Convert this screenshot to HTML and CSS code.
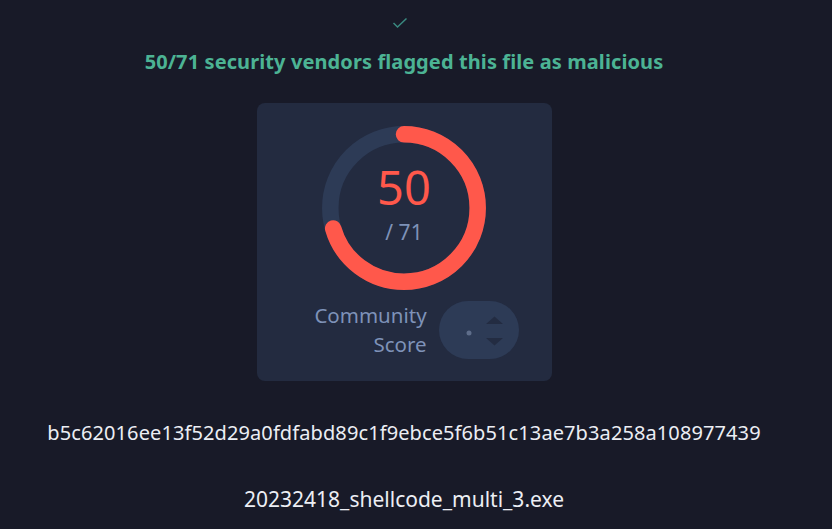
FILE: index.html
```html
<!DOCTYPE html>
<html>
<head>
<meta charset="utf-8">
<link rel="stylesheet" href="styles.css">
</head>
<body>
<div class="page">
  <svg class="check" width="16" height="12" viewBox="0 0 16 12"><path d="M1.5 6 L5.5 10 L14.5 1.5" fill="none" stroke="#3a8a80" stroke-width="1.5"/></svg>
  <h1 class="title">50/71 security vendors flagged this file as malicious</h1>
  <div class="card">
    <div class="ring">
      <svg width="180" height="180" viewBox="0 0 180 180">
        <circle cx="90" cy="90" r="73.7" fill="none" stroke="#2d3b56" stroke-width="16.5"/>
        <circle cx="90" cy="90" r="73.7" fill="none" stroke="#ff584b" stroke-width="16.5" stroke-linecap="round" stroke-dasharray="326 465" transform="rotate(-90 90 90)"/>
      </svg>
      <div class="ring-text">
        <div class="num">50</div>
        <div class="total">/ 71</div>
      </div>
    </div>
    <div class="community">
      <div class="label">Community<br>Score</div>
      <div class="pill">
        <svg width="80" height="58" viewBox="0 0 80 58">
          <circle cx="30" cy="32" r="2.5" fill="#5e6d8a"/>
          <path d="M47 23 L55.5 15.5 L64 23 Z" fill="#232c42"/>
          <path d="M47 37 L55.5 44.5 L64 37 Z" fill="#232c42"/>
        </svg>
      </div>
    </div>
  </div>
  <div class="hash">b5c62016ee13f52d29a0fdfabd89c1f9ebce5f6b51c13ae7b3a258a108977439</div>
  <div class="fname">20232418_shellcode_multi_3.exe</div>
</div>
</body>
</html>
```
FILE: styles.css
```css
html, body { margin: 0; padding: 0; }
body {
  background: #181a28;
  font-family: "Noto Sans", "Open Sans", sans-serif;
  width: 832px;
  height: 529px;
  overflow: hidden;
}
.page {
  width: 808px;
  display: flex;
  flex-direction: column;
  align-items: center;
}
.check { display: block; margin-top: 17px; margin-left: -8px; }
.title {
  margin: 20px 0 0 0;
  font-size: 20px;
  font-weight: 700;
  color: #4cb394;
  letter-spacing: 0.1px;
  line-height: 26px;
}
.card {
  margin-top: 28px;
  width: 295px;
  height: 278px;
  box-sizing: border-box;
  background: #232b40;
  border-radius: 8px;
  display: flex;
  flex-direction: column;
  align-items: center;
  padding-top: 15px;
}
.ring {
  position: relative;
  width: 180px;
  height: 180px;
}
.ring svg { display: block; }
.ring-text {
  position: absolute;
  inset: 0;
  display: flex;
  flex-direction: column;
  align-items: center;
  justify-content: center;
}
.num {
  color: #ff584b;
  font-size: 47px;
  line-height: 52px;
  margin-top: -10px;
}
.total {
  color: #7e92b8;
  font-size: 21px;
  line-height: 26px;
  margin-top: 6px;
}
.community {
  display: flex;
  align-items: center;
  gap: 12px;
  margin-top: 3px;
  margin-left: 25px;
}
.label {
  color: #7e92b8;
  font-size: 20.5px;
  line-height: 29px;
  text-align: right;
}
.pill {
  width: 80px;
  height: 58px;
  border-radius: 29px;
  background: #2d3b56;
}
.pill svg { display: block; }
.hash {
  margin-top: 39px;
  color: #eceef4;
  font-size: 20px;
  letter-spacing: 0.1px;
  line-height: 26px;
}
.fname {
  margin-top: 39px;
  color: #eceef4;
  font-size: 21px;
  line-height: 28px;
}
```
